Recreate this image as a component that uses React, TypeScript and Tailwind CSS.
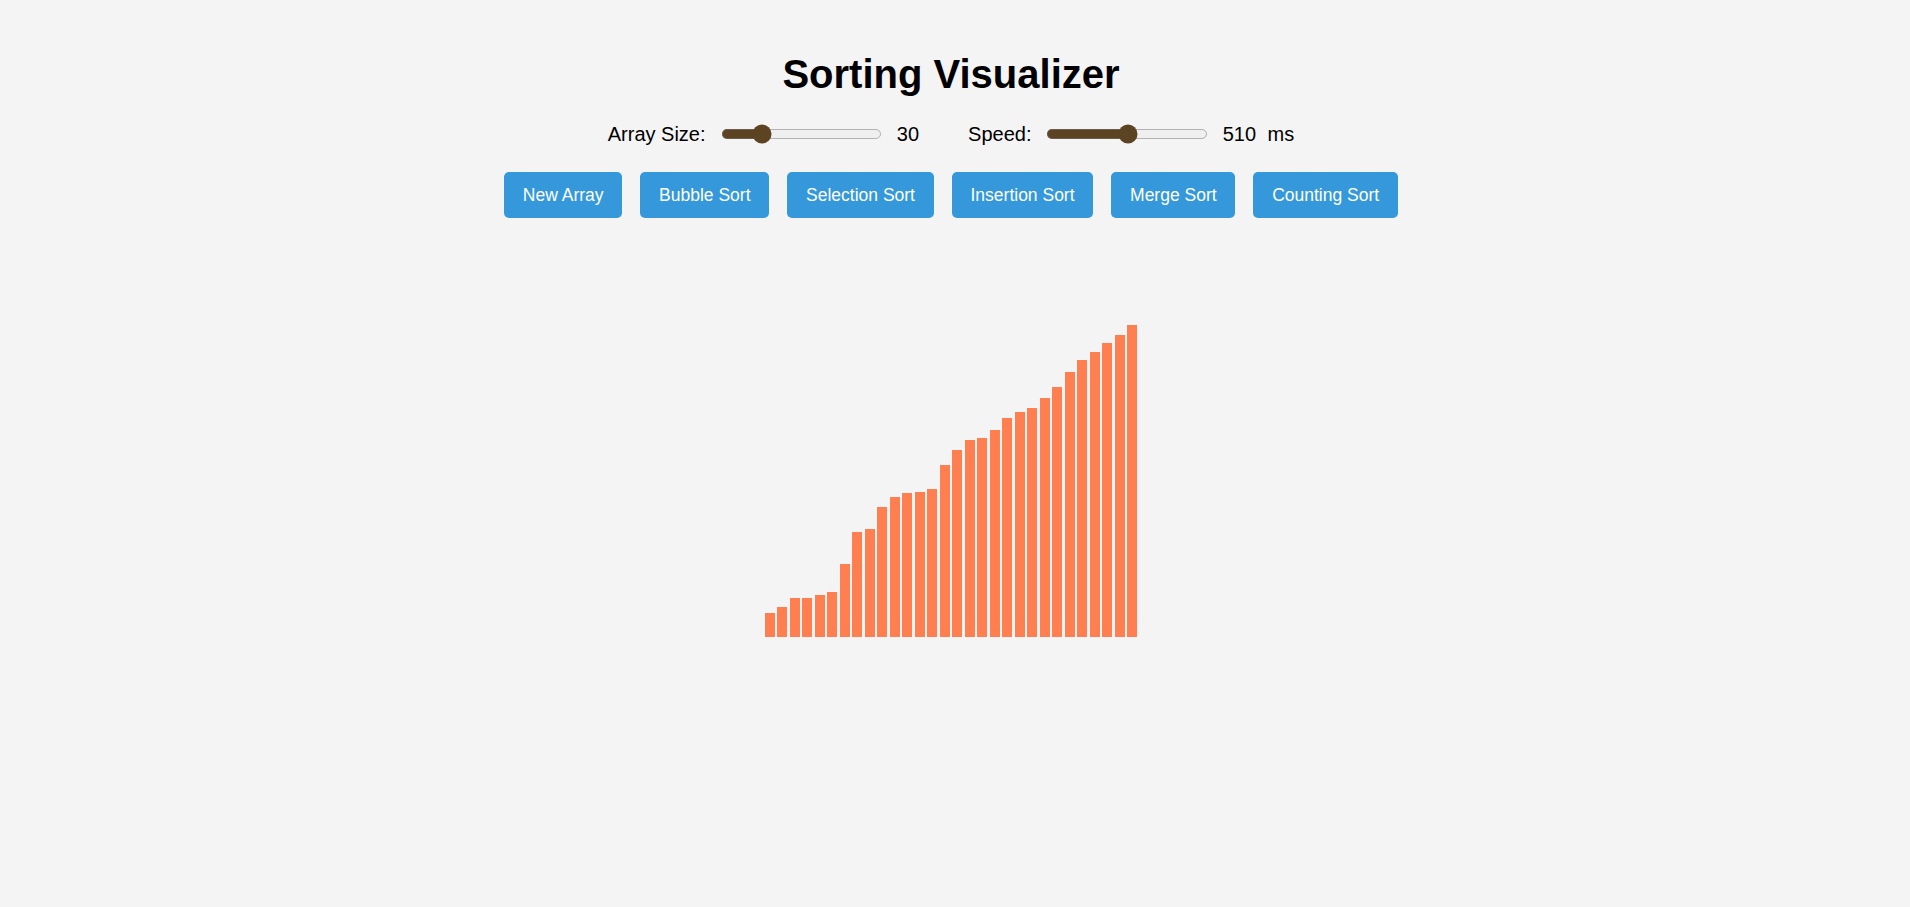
import { useState } from "react";

const INITIAL_BARS = [
  24, 30, 39, 39, 42, 45, 73, 105, 108, 130, 140, 144, 145, 148, 172, 187, 197, 199, 207, 219, 225, 229, 239, 250, 265,
  277, 285, 294, 302, 312,
];

const BUTTONS = ["New Array", "Bubble Sort", "Selection Sort", "Insertion Sort", "Merge Sort", "Counting Sort"];

export default function App() {
  const [size, setSize] = useState(30);
  const [speed, setSpeed] = useState(510);
  const [bars] = useState<number[]>(INITIAL_BARS);

  return (
    <div className="min-h-screen bg-[#f4f4f4] pr-[8px] pt-[51px] font-['Liberation_Sans',Arial,sans-serif] text-black">
      <h1 className="text-center text-[40px] font-bold leading-[46px]">Sorting Visualizer</h1>

      <div className="mt-[24px] flex h-[26px] items-center justify-center text-[20px] leading-[23px]">
        <div className="flex items-center">
          <label className="mr-[15px]">Array Size:</label>
          <input
            type="range"
            min={10}
            max={100}
            value={size}
            onChange={(e) => setSize(Number(e.target.value))}
            className="m-0 mr-[12px] w-[129px] accent-[#5c4322] [zoom:1.25]"
          />
          <span>{size}</span>
        </div>
        <div className="ml-[49px] flex items-center">
          <label className="mr-[15px]">Speed:</label>
          <input
            type="range"
            min={10}
            max={1000}
            value={speed}
            onChange={(e) => setSpeed(Number(e.target.value))}
            className="m-0 mr-[12px] w-[129px] accent-[#5c4322] [zoom:1.25]"
          />
          <span>{speed}</span>
          <span className="ml-[11.5px]">ms</span>
        </div>
      </div>

      <div className="mt-[25px] flex justify-center gap-[18px]">
        {BUTTONS.map((label) => (
          <button
            key={label}
            className="rounded-[5px] bg-[#3498db] px-[18.75px] py-[12.5px] text-[17.5px] leading-[21px] text-white"
          >
            {label}
          </button>
        ))}
      </div>

      <div className="mt-[19px] flex h-[400px] items-end justify-center">
        {bars.map((h, i) => (
          <div key={i} className="mx-[1.25px] w-[10px] bg-[#ff7f50]" style={{ height: h }} />
        ))}
      </div>
    </div>
  );
}
